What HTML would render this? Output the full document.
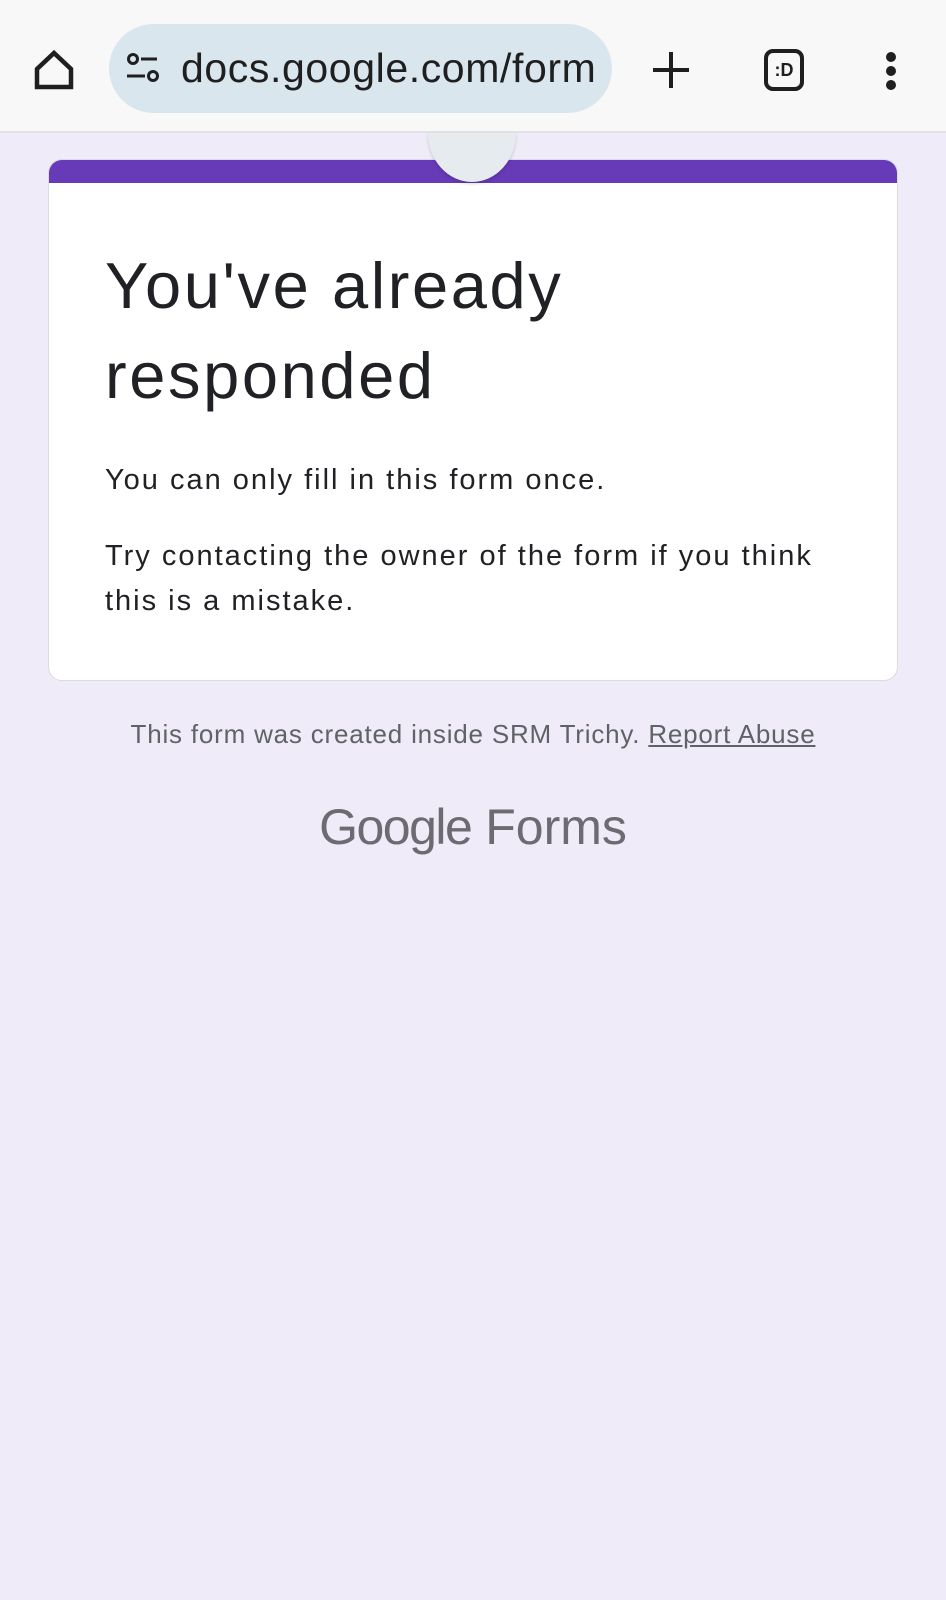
<!DOCTYPE html>
<html><head><meta charset="utf-8"><style>
*{margin:0;padding:0;box-sizing:border-box}
body{width:946px;height:1600px;background:#f0ebf8;font-family:"Liberation Sans",sans-serif;position:relative;overflow:hidden}
.bar{position:absolute;left:0;top:0;width:946px;height:133px;background:#f8f8f8;border-bottom:2px solid #e2e2e2}
.pill{position:absolute;left:109px;top:24px;width:503px;height:89px;border-radius:45px;background:#dae6ee;overflow:hidden}
.url{position:absolute;left:72px;top:21px;font-size:41px;color:#1f1f1f;white-space:nowrap;letter-spacing:0.6px;width:414px;overflow:hidden}
.card{position:absolute;left:48px;top:159px;width:850px;height:522px;background:#fff;border-radius:14px;border:1px solid #dadce0;overflow:hidden}
.top{position:absolute;left:0;top:0;right:0;height:23px;background:#673ab7}
.circ{position:absolute;left:428px;top:133px;width:88px;height:49px;border-radius:0 0 44px 44px/0 0 49px 49px;background:#e6ebf0;box-shadow:0 2px 3px rgba(0,0,0,.15)}
h1{position:absolute;left:56px;top:81px;font-weight:normal;font-size:65px;line-height:90px;color:#202124;letter-spacing:2.6px}
.p{position:absolute;left:56px;font-size:29px;color:#202124;line-height:45px;letter-spacing:2px}
.foot{position:absolute;left:0;width:946px;top:719px;text-align:center;font-size:26px;color:#5f6368;letter-spacing:0.8px}
.foot u{color:#5f6368}
.logo{position:absolute;left:0;width:946px;top:798px;text-align:center;font-size:50px;color:#6e6a72}
</style></head><body>
<div class="bar">
<svg style="position:absolute;left:32px;top:48px" width="44" height="44" viewBox="0 0 44 44"><path d="M5 21 L22 5 L39 21 V39 H5 Z" fill="none" stroke="#1f1f1f" stroke-width="4.5" stroke-linejoin="miter"/></svg>
<div class="pill">
<svg style="position:absolute;left:16px;top:28px" width="36" height="34" viewBox="0 0 36 34"><circle cx="8" cy="7" r="4.5" fill="none" stroke="#1f1f1f" stroke-width="3"/><path d="M16 7H32M2 24H20" stroke="#1f1f1f" stroke-width="3"/><circle cx="28" cy="24" r="4.5" fill="none" stroke="#1f1f1f" stroke-width="3"/></svg>
<div class="url">docs.google.com/form</div></div>
<svg style="position:absolute;left:651px;top:50px" width="40" height="40" viewBox="0 0 40 40"><path d="M20 2V38M2 20H38" stroke="#1f1f1f" stroke-width="4"/></svg>
<div style="position:absolute;left:764px;top:49px;width:40px;height:42px;border:4px solid #1f1f1f;border-radius:9px;font-size:18px;font-weight:bold;text-align:center;line-height:34px;color:#1f1f1f">:D</div>
<div style="position:absolute;left:886px;top:52px;width:10px;height:10px;border-radius:5px;background:#1f1f1f;box-shadow:0 14px 0 #1f1f1f,0 28px 0 #1f1f1f"></div>
</div>
<div class="card"><div class="top"></div>
<h1>You've already<br>responded</h1>
<div class="p" style="top:298px">You can only fill in this form once.</div>
<div class="p" style="top:374px">Try contacting the owner of the form if you think<br>this is a mistake.</div>
</div>
<div class="circ"></div>
<div class="foot">This form was created inside SRM Trichy. <u>Report Abuse</u></div>
<div class="logo"><span style="letter-spacing:-1.5px">Google</span> Forms</div>
</body></html>
